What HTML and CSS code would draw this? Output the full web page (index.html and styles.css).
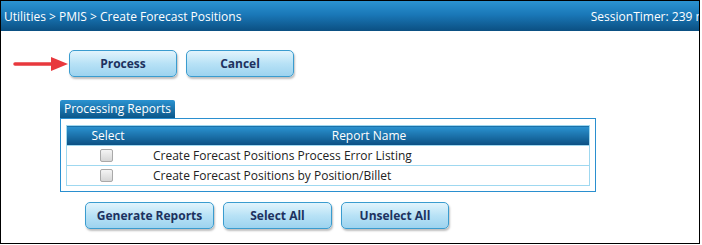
FILE: index.html
```html
<!DOCTYPE html>
<html>
<head>
<meta charset="utf-8">
<link rel="stylesheet" href="styles.css">
</head>
<body>
<div class="frame">
  <div class="topbar">
    <span class="crumbs">Utilities &gt; PMIS &gt; Create Forecast Positions</span>
    <span class="timer">SessionTimer: 239 min</span>
  </div>
  <div class="actions">
    <svg class="arrow" width="56" height="16" viewBox="0 0 56 16">
      <line x1="2" y1="8" x2="42" y2="8" stroke="#e8383d" stroke-width="3.5" stroke-linecap="round"/>
      <polygon points="38,1 55,8 38,15" fill="#e8383d"/>
    </svg>
    <button class="btn w108">Process</button>
    <button class="btn w108">Cancel</button>
  </div>
  <div class="section">
    <div class="tab">Processing Reports</div>
    <div class="panel">
      <table class="grid">
        <thead>
          <tr><th class="c-sel">Select</th><th>Report Name</th></tr>
        </thead>
        <tbody>
          <tr><td class="c-sel"><span class="chk"></span></td><td>Create Forecast Positions Process Error Listing</td></tr>
          <tr><td class="c-sel"><span class="chk"></span></td><td>Create Forecast Positions by Position/Billet</td></tr>
        </tbody>
      </table>
    </div>
  </div>
  <div class="bottom">
    <button class="btn w129">Generate Reports</button>
    <button class="btn w109">Select All</button>
    <button class="btn w108">Unselect All</button>
  </div>
</div>
</body>
</html>
```
FILE: styles.css
```css
html, body { margin: 0; padding: 0; background: #fff; }
.frame {
  width: 698px;
  height: 242px;
  border: 1px solid #000;
  overflow: hidden;
  font-family: "Open Sans", "DejaVu Sans", sans-serif;
  box-sizing: content-box;
}
.topbar {
  height: 30px;
  background: linear-gradient(#2b93d1, #1a78b8 45%, #0b4f82);
  color: #fff;
  display: flex;
  align-items: center;
  padding-left: 3px;
  font-size: 12px;
  white-space: nowrap;
}
.crumbs { flex-shrink: 0; }
.timer { flex-shrink: 0; margin-left: auto; margin-right: -18px; }
.actions {
  display: flex;
  align-items: center;
  margin-top: 19px;
  padding-left: 12px;
  gap: 9px;
}
.arrow { margin-right: -9px; }
.btn {
  box-sizing: border-box;
  height: 27px;
  border: 1px solid #3a9ccf;
  border-radius: 5px;
  background: linear-gradient(#e2f4fc, #b8e2f6 50%, #9dd3ef);
  box-shadow: 1px 2px 2px rgba(0,0,0,0.25);
  color: #1d3260;
  font-family: "Open Sans", sans-serif;
  font-weight: bold;
  font-size: 12px;
  padding: 0;
}
.w108 { width: 108px; }
.w109 { width: 109px; }
.w129 { width: 129px; }
.section {
  margin: 19px 0 0 59px;
  width: 536px;
}
.tab {
  display: inline-block;
  height: 18px;
  line-height: 18px;
  padding: 0 4px 0 4px;
  background: linear-gradient(#2b93d1, #0b5689);
  color: #fff;
  font-size: 12px;
  border-radius: 2px 2px 0 0;
}
.panel {
  border: 1px solid #2a8fcf;
  padding: 6px 5px 5px 5px;
}
.grid {
  width: 100%;
  border-collapse: collapse;
  border: 1px solid #9fd8f0;
  font-size: 12px;
}
.grid th {
  height: 19px;
  padding: 0;
  background: linear-gradient(#2b93d1, #0b4f82);
  color: #fff;
  font-weight: normal;
  text-align: center;
}
.grid td {
  height: 19px;
  padding: 0 0 0 4px;
  border-top: 1px solid #9fd8f0;
  color: #222;
  text-align: left;
}
.grid .c-sel { width: 82px; text-align: center; padding: 0; }
.chk {
  display: inline-block;
  width: 11px;
  height: 11px;
  border: 1px solid #a9a9a9;
  border-radius: 2px;
  background: linear-gradient(#f4f4f4, #d6d6d6);
  vertical-align: middle;
  margin-top: -3px;
  margin-right: 4px;
}
.bottom {
  display: flex;
  gap: 9px;
  padding-left: 84px;
  margin-top: 10px;
}
```
